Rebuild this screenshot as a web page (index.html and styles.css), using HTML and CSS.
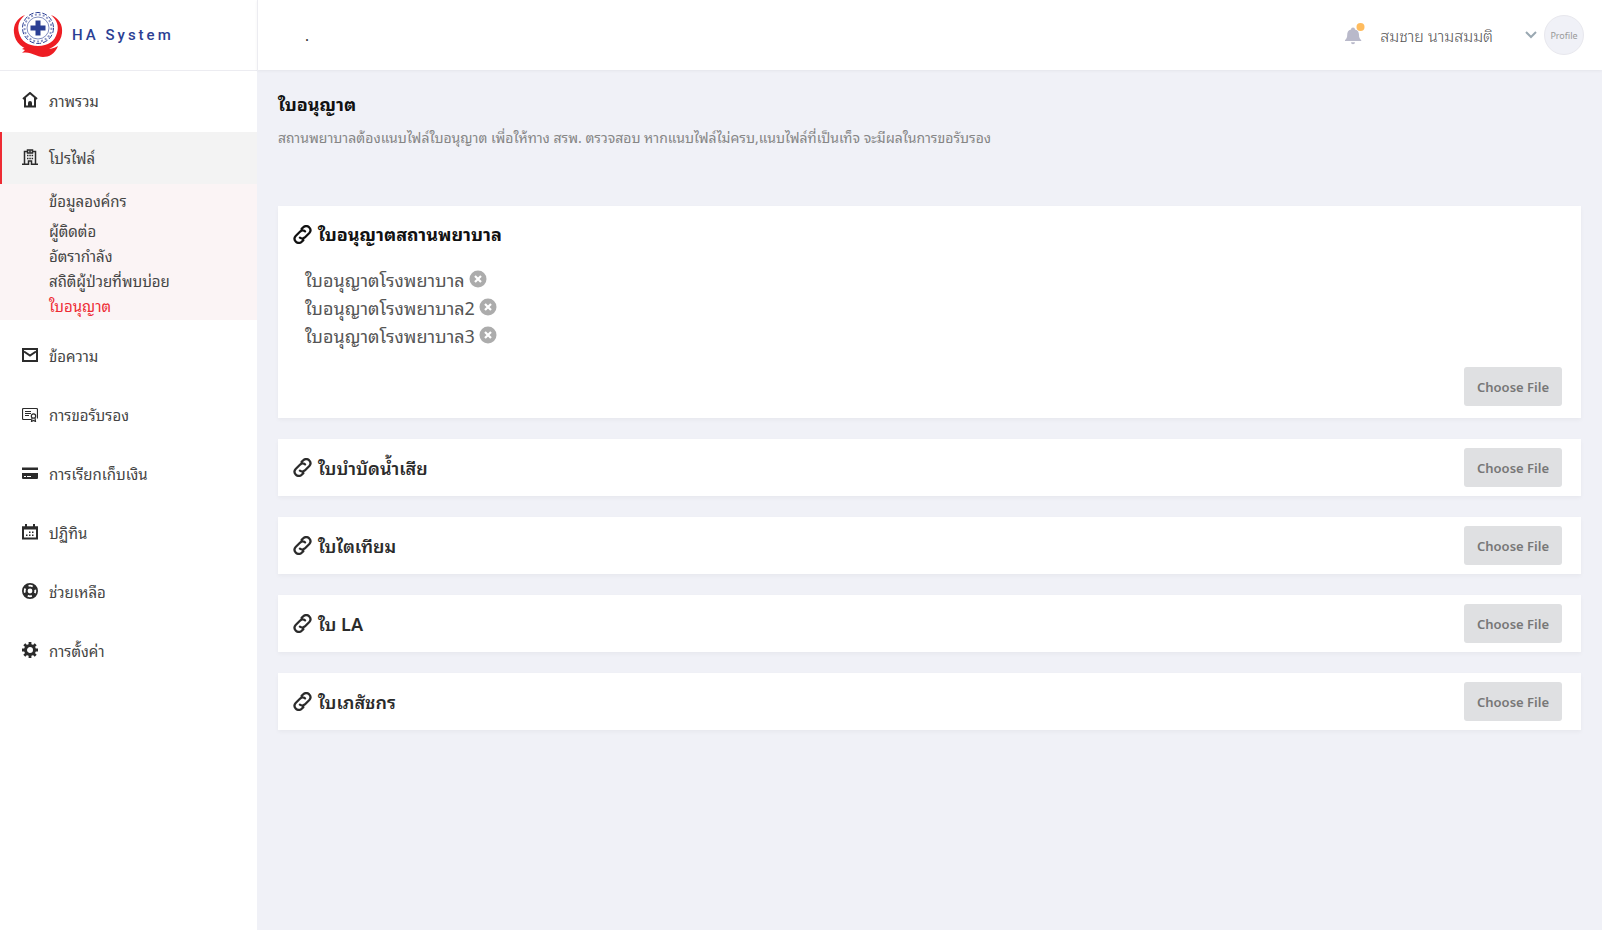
FILE: index.html
```html
<!DOCTYPE html>
<html lang="th">
<head>
<meta charset="utf-8">
<meta name="viewport" content="width=device-width, initial-scale=1">
<title>HA System</title>
<link rel="stylesheet" href="styles.css">
</head>
<body>

<!-- shared icons -->
<svg class="defs" width="0" height="0" aria-hidden="true">
    <symbol id="link" viewBox="1 1 22 22">
        <path d="M11 5.500l1.900-1.900a4.700 4.700 0 0 1 7 .3 4.700 4.700 0 0 1 0 6.300l-5.200 5.200a4.500 4.500 0 0 1-5.700.3M13 18.500l-1.900 1.900a4.700 4.700 0 0 1-7-.3 4.700 4.700 0 0 1 0-6.300l5.200-5.200a4.500 4.500 0 0 1 5.700-.3" fill="none" stroke="currentColor" stroke-width="2.600" stroke-linecap="round"/>
    </symbol>
    <symbol id="close" viewBox="0 0 18 18">
        <circle cx="9" cy="9" r="8.5" fill="#acacac"/>
        <path d="M6 6l6 6M12 6l-6 6" stroke="#fff" stroke-width="2.2"/>
    </symbol>
</svg>

<div class="page">
    <aside class="sidebar">
        <a href="#" class="brand">
            <svg class="logo" viewBox="0 0 50 46">
                <path d="M12 3C4 6 0 13 1 21c1 10 9 16 19 18 3 .6 6 .6 9 0 11-2 19-8 20-18C50 13 46 6 38 3c6 5 8 11 6 18-2 8-9 13-19 13S8 29 6 21C4 14 6 8 12 3z" fill="#ee1d23"/>
                <path d="M16 36c5 2 9 1 14 1 6 0 10 0 15-3-3 8-9 11-15 11-7 0-12-6-21-4l3-3-3-1c3-2 5-2 7-1z" fill="#ee1d23"/>
                <circle cx="25" cy="16" r="15.500" fill="#fff" stroke="#2b3f94" stroke-dasharray="5 2"/>
                <circle cx="25" cy="16" r="13.500" fill="none" stroke="#8c96c6" stroke-width="2" stroke-dasharray="2 2"/>
                <circle cx="25" cy="16" r="11" fill="#fff" stroke="#2b3f94" stroke-width=".6"/>
                <path d="M22.500 8.500h5v5h5v5h-5v5h-5v-5h-5v-5h5z" fill="#2b3f94"/>
            </svg>
            <span>HA System</span>
        </a>
        <nav>
            <ul class="menu">
                <li><a href="#">
                    <svg viewBox="0 0 16 16"><path d="M1 7l7-6 7 6M3 6v8.500h10V6" fill="none" stroke="currentColor" stroke-width="2"/><path d="M6 14v-3a2 2 0 0 1 4 0v3z" fill="currentColor"/></svg>
                    ภาพรวม</a></li>
                <li class="open">
                    <a href="#">
                        <svg viewBox="0 0 16 16"><path d="M2.500 15V2.500h3M10.500 2.500h3V15M0 15.200h6.500V12h3v3.200H16M5.500 4V1h5v3z" fill="none" stroke="currentColor" stroke-width="1.500"/><path d="M8 1.200v2.600M5 6.500h1.500M7.300 6.500h1.500M9.600 6.500h1.500M5 9.500h1.500M7.300 9.500h1.500M9.600 9.500h1.500" stroke="currentColor" stroke-width="1.500"/></svg>
                        โปรไฟล์</a>
                    <ul class="submenu">
                        <li><a href="#">ข้อมูลองค์กร</a></li>
                        <li><a href="#">ผู้ติดต่อ</a></li>
                        <li><a href="#">อัตรากำลัง</a></li>
                        <li><a href="#">สถิติผู้ป่วยที่พบบ่อย</a></li>
                        <li><a href="#" class="current">ใบอนุญาต</a></li>
                    </ul>
                </li>
                <li><a href="#">
                    <svg viewBox="0 0 16 16"><path d="M1 2h14v12H1zM2 4.500l6 4 6-4" fill="none" stroke="currentColor" stroke-width="2"/></svg>
                    ข้อความ</a></li>
                <li><a href="#">
                    <svg viewBox="0 0 16 16"><path d="M9 13.500H1.500a1 1 0 0 1-1-1v-9a1 1 0 0 1 1-1h13a1 1 0 0 1 1 1v9M3 5.500h6M3 7.500h6M3 9.500h4M10 12l-.5 3.500 2-1 2 1L13 12" fill="none" stroke="currentColor" stroke-width="1.200"/><circle cx="11.500" cy="10" r="2.200" fill="none" stroke="currentColor" stroke-width="1.200"/></svg>
                    การขอรับรอง</a></li>
                <li><a href="#">
                    <svg viewBox="0 0 16 16"><path d="M0 2.500h16V5H0zM0 8h16v5a1 1 0 0 1-1 1H1a1 1 0 0 1-1-1z" fill="currentColor"/><path d="M2 11.500h2M5 11.500h4" stroke="#fff"/></svg>
                    การเรียกเก็บเงิน</a></li>
                <li><a href="#">
                    <svg viewBox="0 0 16 16"><path d="M1 3.500h14v11H1z" fill="none" stroke="currentColor" stroke-width="2"/><path d="M0 2.500h16v3H0zM3 0h2v3H3zM11 0h2v3h-2zM7 7.500h1.500V9H7zM10 7.500h1.500V9H10zM4 10.500h1.500V12H4zM7 10.500h1.500V12H7zM10 10.500h1.500V12H10z" fill="currentColor"/></svg>
                    ปฏิทิน</a></li>
                <li><a href="#">
                    <svg viewBox="0 0 16 16"><circle cx="8" cy="8" r="5.200" fill="none" stroke="currentColor" stroke-width="5.600"/><circle cx="8" cy="8" r="5.300" fill="none" stroke="#fff" stroke-width="1.800" stroke-dasharray="4.300 4.030" stroke-dashoffset="2.150"/></svg>
                    ช่วยเหลือ</a></li>
                <li><a href="#">
                    <svg viewBox="0 0 16 16"><circle cx="8" cy="8" r="4.500" fill="none" stroke="currentColor" stroke-width="3"/><path d="M8 0v3M8 13v3M0 8h3M13 8h3M2.300 2.300l2.200 2.200M11.500 11.500l2.200 2.200M13.700 2.300l-2.200 2.200M4.500 11.500l-2.200 2.200" stroke="currentColor" stroke-width="2.800"/></svg>
                    การตั้งค่า</a></li>
            </ul>
        </nav>
    </aside>

    <div class="content">
        <header class="topbar">
            <span class="dot">.</span>
            <div class="account">
                <button type="button" class="bell" aria-label="การแจ้งเตือน">
                    <svg viewBox="0 0 20 24">
                        <path d="M6 6.500a2 2 0 0 1 4 0c3 .8 4 3 4 5.500 0 2.500.8 4 2.200 5v1H0v-1c1.400-1 2.200-2.500 2.200-5 0-2.500.8-4.700 3.800-5.500zM6 19.200h4a2 2 0 0 1-4 0z" fill="#b9b9ca"/>
                        <circle cx="15.500" cy="4" r="4" fill="#ffbc5e"/>
                    </svg>
                </button>
                <span class="username">สมชาย นามสมมติ</span>
                <button type="button" class="caret" aria-label="เมนูผู้ใช้">
                    <svg viewBox="0 0 12 8"><path d="M1 1l5 5 5-5" fill="none" stroke="#9aa8b2" stroke-width="2"/></svg>
                </button>
                <a href="#" class="avatar">Profile</a>
            </div>
        </header>

        <main>
            <h1>ใบอนุญาต</h1>
            <p class="hint">สถานพยาบาลต้องแนบไฟล์ใบอนุญาต เพื่อให้ทาง สรพ. ตรวจสอบ หากแนบไฟล์ไม่ครบ,แนบไฟล์ที่เป็นเท็จ จะมีผลในการขอรับรอง</p>

            <div class="cards">
                <section class="card card-files">
                    <h2><svg><use href="#link"/></svg>ใบอนุญาตสถานพยาบาล</h2>
                    <ul class="files">
                        <li>ใบอนุญาตโรงพยาบาล <button type="button" aria-label="ลบ"><svg><use href="#close"/></svg></button></li>
                        <li>ใบอนุญาตโรงพยาบาล2<button type="button" aria-label="ลบ"><svg><use href="#close"/></svg></button></li>
                        <li>ใบอนุญาตโรงพยาบาล3<button type="button" aria-label="ลบ"><svg><use href="#close"/></svg></button></li>
                    </ul>
                    <button type="button" class="choose">Choose File</button>
                </section>
                <section class="card">
                    <h2><svg><use href="#link"/></svg>ใบบำบัดน้ำเสีย</h2>
                    <button type="button" class="choose">Choose File</button>
                </section>
                <section class="card">
                    <h2><svg><use href="#link"/></svg>ใบไตเทียม</h2>
                    <button type="button" class="choose">Choose File</button>
                </section>
                <section class="card">
                    <h2><svg><use href="#link"/></svg>ใบ LA</h2>
                    <button type="button" class="choose">Choose File</button>
                </section>
                <section class="card">
                    <h2><svg><use href="#link"/></svg>ใบเภสัชกร</h2>
                    <button type="button" class="choose">Choose File</button>
                </section>
            </div>
        </main>
    </div>
</div>

</body>
</html>
```

FILE: styles.css
```css
* { margin: 0; padding: 0; box-sizing: border-box; }
body { background: #f0f1f7; color: #2b2b2b; font-family: "Noto Sans", "Noto Sans Thai Looped", "Noto Looped Thai", "Sarabun", "Loma", "Garuda", sans-serif; font-size: 15px; }
ul { list-style: none; }
a { color: inherit; text-decoration: none; }
button { border: 0; background: none; font: inherit; cursor: pointer; }
svg { display: block; flex: none; }
.defs { position: absolute; }

.page { display: flex; min-height: 100vh; }

/* sidebar */
.sidebar { width: 257px; flex: none; background: #fff; }
.brand { display: flex; align-items: center; gap: 9px; height: 71px; padding: 0 13px; border-bottom: 1px solid #ececf1; color: #2b3f94; font-family: Roboto, sans-serif; font-size: 15px; font-weight: 500; letter-spacing: 3px; }
.logo { width: 50px; height: 46px; }
.menu > li > a { display: flex; align-items: center; gap: 11px; height: 59px; padding: 0 0 2px 22px; color: #444; white-space: nowrap; }
.menu svg { width: 16px; height: 16px; color: #2b2b2b; }
.menu .open { margin: 2px 0 6px; background: #fbf4f5; }
.menu .open > a { height: 52px; padding-left: 20px; border-left: 2px solid #ee2b33; background: #f3f3f3; }
.submenu { padding: 5px 0 1px 49px; color: #444; }
.submenu a { display: block; height: 25px; line-height: 25px; white-space: nowrap; }
.submenu li:first-child a { height: 30px; }
.submenu .current { color: #ee2b33; }

/* header */
.content { flex: 1; min-width: 0; }
.topbar { display: flex; align-items: center; justify-content: space-between; height: 70px; padding: 0 18px 0 47px; background: #fff; border-left: 1px solid #ececf1; box-shadow: 0 1px 3px rgba(0,0,0,.05); }
.account { display: flex; align-items: center; }
.bell svg { width: 20px; height: 24px; }
.username { margin: 0 32px 0 15px; font-size: 16px; font-weight: 300; color: #555; }
.caret svg { width: 12px; height: 8px; }
.avatar { display: flex; align-items: center; justify-content: center; width: 40px; height: 40px; margin-left: 7px; border-radius: 50%; background: #f0f1f7; border: 1px solid #e8e8ee; color: #999; font-size: 9px; }

/* licences */
main { padding: 19px 21px 40px; }
h1 { font-size: 18px; line-height: 30px; font-weight: 700; color: #111; }
.hint { margin-top: 5px; font-size: 14px; line-height: 28px; color: #858585; }
.cards { display: flex; flex-direction: column; gap: 21px; margin-top: 54px; }
.card { display: flex; align-items: center; justify-content: space-between; height: 57px; padding: 0 19px 0 15px; background: #fff; box-shadow: 0 2px 4px rgba(0,0,0,.04); }
.card h2 { display: flex; align-items: center; gap: 6px; font-size: 18px; line-height: 30px; font-weight: 600; }
.card h2 svg { width: 19px; height: 19px; }
.card-files { flex-direction: column; align-items: stretch; height: auto; padding-top: 13px; padding-bottom: 12px; }
.card-files h2 { font-weight: 700; color: #111; }
.card-files .choose { align-self: flex-end; }
.files { margin: 16px 0 18px 12px; font-size: 18px; color: #555; }
.files li { display: flex; align-items: center; gap: 4px; height: 28px; }
.files svg { width: 18px; height: 18px; }
.choose { width: 98px; height: 39px; border-radius: 3px; background: #dfe0e2; color: #777; font-size: 13px; font-weight: 600; white-space: nowrap; }
```
